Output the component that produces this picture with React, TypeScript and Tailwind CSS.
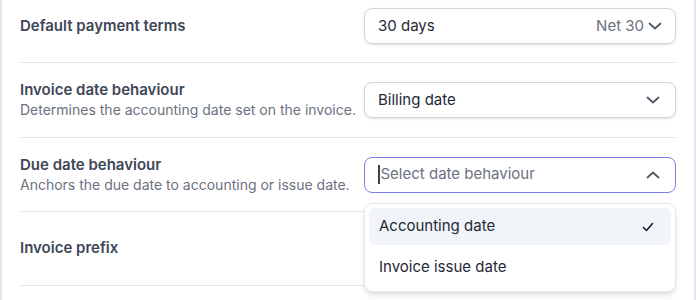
import React from "react";

const Chevron = ({ up = false, className = "" }: { up?: boolean; className?: string }) => (
  <svg width="16" height="16" viewBox="0 0 16 16" fill="none" className={className}>
    <path
      d={up ? "M2.5 10.5 L8 5.5 L13.5 10.5" : "M2.5 5.5 L8 10.5 L13.5 5.5"}
      stroke="currentColor"
      strokeWidth="1.7"
      strokeLinecap="round"
      strokeLinejoin="round"
    />
  </svg>
);

const Check = () => (
  <svg width="14" height="14" viewBox="0 0 14 14" fill="none">
    <path d="M2.5 7.5 L5.5 10.5 L11.5 3.5" stroke="#111827" strokeWidth="1.5" strokeLinecap="round" strokeLinejoin="round" />
  </svg>
);

export default function App() {
  return (
    <div
      className="w-[696px] h-[300px] overflow-hidden bg-white border-l-[2px] border-r-[2px] border-[#e5e7eb] text-[#374151]"
      style={{ fontFamily: "Inter, 'Noto Sans', sans-serif" }}
    >
      <div className="pl-[18px] pr-[18px]">
        {/* Row 1 */}
        <div className="flex items-center justify-between pt-[8px] pb-[18px] border-b border-[#e5e7eb]">
          <div className="text-[15px] font-semibold text-[#3d4757]">Default payment terms</div>
          <div className="w-[312px] h-[36px] rounded-lg border border-[#d1d5db] shadow-sm flex items-center pl-[13px] pr-[12px]">
            <span className="text-[15px] text-[#1f2937]">30 days</span>
            <span className="ml-auto text-[15px] text-[#6b7280]">Net 30</span>
            <Chevron className="ml-[3px] text-[#4b5563]" />
          </div>
        </div>
        {/* Row 2 */}
        <div className="flex items-center justify-between h-[75px] border-b border-[#e5e7eb]">
          <div>
            <div className="text-[15px] font-semibold text-[#3d4757] leading-[20px]">Invoice date behaviour</div>
            <div className="text-[14px] text-[#6b7280] leading-[20px]">Determines the accounting date set on the invoice.</div>
          </div>
          <div className="w-[312px] h-[36px] rounded-lg border border-[#d1d5db] shadow-sm flex items-center pl-[13px] pr-[14px]">
            <span className="text-[15px] text-[#1f2937]">Billing date</span>
            <Chevron className="ml-auto text-[#4b5563]" />
          </div>
        </div>
        {/* Row 3 */}
        <div className="relative flex items-center justify-between h-[74px] border-b border-[#e5e7eb]">
          <div>
            <div className="text-[15px] font-semibold text-[#3d4757] leading-[20px]">Due date behaviour</div>
            <div className="text-[14px] text-[#6b7280] leading-[20px]">Anchors the due date to accounting or issue date.</div>
          </div>
          <div className="w-[312px] h-[36px] rounded-lg border border-[#7c7ff2] flex items-center pl-[13px] pr-[14px]">
            <span className="w-[1.5px] h-[19px] bg-[#374151] mr-[1px]" />
            <span className="text-[15px] text-[#6b7280]">Select date behaviour</span>
            <Chevron up className="ml-auto text-[#4b5563]" />
          </div>
          {/* Dropdown */}
          <div className="absolute right-0 top-[65px] z-10 w-[312px] rounded-lg border border-[#e5e7eb] bg-white shadow-md pt-[4px] px-[4px] pb-[2px]">
            <div className="h-[37px] rounded-md bg-[#f1f4f9] flex items-center pl-[10px] pr-[16px]">
              <span className="text-[15px] text-[#1f2937]">Accounting date</span>
              <span className="ml-auto"><Check /></span>
            </div>
            <div className="h-[44px] flex items-center pl-[10px] pr-[14px]">
              <span className="text-[15px] text-[#1f2937]">Invoice issue date</span>
            </div>
          </div>
        </div>
        {/* Row 4 */}
        <div className="flex items-center justify-between h-[74px] border-b border-[#e5e7eb]">
          <div className="text-[15px] font-semibold text-[#3d4757]">Invoice prefix</div>
        </div>
      </div>
    </div>
  );
}
